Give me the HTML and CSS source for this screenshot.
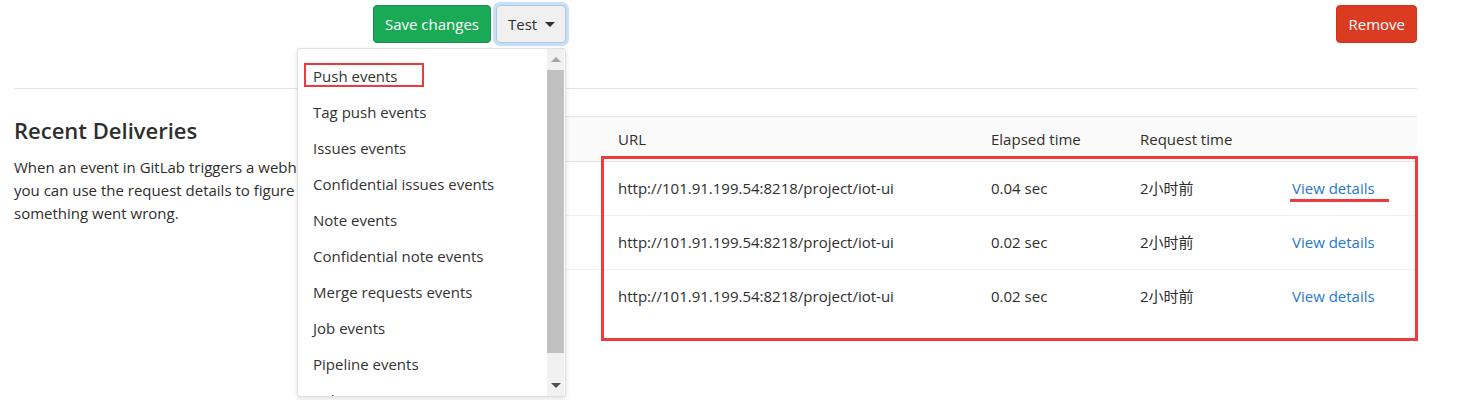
FILE: index.html
```html
<!DOCTYPE html>
<html lang="en">
<head>
<meta charset="utf-8">
<title>Webhook</title>
<link rel="stylesheet" href="styles.css">
</head>
<body>
<div class="page">
  <div class="toolbar">
    <div class="toolbar-spacer"></div>
    <div class="actions">
      <button class="btn btn-success">Save changes</button>
      <div class="dropdown">
        <button class="btn btn-default btn-test is-focused">Test<span class="caret"></span></button>
        <div class="dropdown-menu">
          <ul class="menu-list">
            <li class="menu-item"><span class="mark-box"></span>Push events</li>
            <li class="menu-item">Tag push events</li>
            <li class="menu-item">Issues events</li>
            <li class="menu-item">Confidential issues events</li>
            <li class="menu-item">Note events</li>
            <li class="menu-item">Confidential note events</li>
            <li class="menu-item">Merge requests events</li>
            <li class="menu-item">Job events</li>
            <li class="menu-item">Pipeline events</li>
            <li class="menu-item">Wiki page events</li>
          </ul>
          <div class="scrollbar">
            <div class="sb-btn"><span class="arrow-up"></span></div>
            <div class="sb-track"><div class="sb-thumb"></div></div>
            <div class="sb-btn"><span class="arrow-down"></span></div>
          </div>
        </div>
      </div>
      <button class="btn btn-danger">Remove</button>
    </div>
  </div>

  <div class="section">
    <div class="intro">
      <h3 class="intro-title">Recent Deliveries</h3>
      <p class="intro-text">When an event in GitLab triggers a webhook, you can use the request details to figure out if something went wrong.</p>
    </div>
    <div class="deliveries">
      <table class="hooks-table">
        <colgroup>
          <col class="c-lead"><col class="c-url"><col class="c-elapsed"><col class="c-time"><col class="c-action">
        </colgroup>
        <thead>
          <tr><th></th><th>URL</th><th>Elapsed time</th><th>Request time</th><th></th></tr>
        </thead>
        <tbody>
          <tr><td></td><td>http://101.91.199.54:8218/project/iot-ui</td><td>0.04 sec</td><td>2小时前</td><td><a class="link" href="#">View details</a></td></tr>
          <tr><td></td><td>http://101.91.199.54:8218/project/iot-ui</td><td>0.02 sec</td><td>2小时前</td><td><a class="link" href="#">View details</a></td></tr>
          <tr><td></td><td>http://101.91.199.54:8218/project/iot-ui</td><td>0.02 sec</td><td>2小时前</td><td><a class="link" href="#">View details</a></td></tr>
        </tbody>
      </table>
      <div class="mark-rows"></div>
      <div class="mark-underline"></div>
    </div>
  </div>
</div>
</body>
</html>
```

FILE: styles.css
```css
* { box-sizing: border-box; }

html, body {
  min-height: 400px;
}

body {
  margin: 0;
  background: #fff;
  color: #2e2e2e;
  font-family: "Open Sans", "Noto Sans CJK SC", sans-serif;
  font-size: 15px;
}

.page {
  min-height: 400px;
  padding: 0 51px 0 14px;
}

/* top toolbar */
.toolbar {
  display: grid;
  grid-template-columns: 344px 1fr;
  column-gap: 15px;
  height: 89px;
  padding-top: 5px;
  border-bottom: 1px solid #e5e5e5;
}

.actions {
  display: flex;
  align-items: flex-start;
  gap: 5px;
}

.btn {
  height: 38px;
  padding: 0 11px;
  border: 1px solid transparent;
  border-radius: 4px;
  font: inherit;
  line-height: 36px;
  display: inline-flex;
  align-items: center;
  cursor: pointer;
}

.btn-success {
  background: #1aaa55;
  border-color: #168f48;
  color: #fff;
}

.btn-danger {
  background: #db3b21;
  border-color: #c9341d;
  color: #fff;
  margin-left: auto;
}

.btn-default {
  background: #f0f0f0;
  border-color: #a9c9ec;
  color: #2e2e2e;
}

.btn-test {
  width: 70px;
}

.is-focused {
  box-shadow: 0 0 0 3px #c9dff6;
}

.caret {
  display: inline-block;
  width: 0;
  height: 0;
  margin-left: 8px;
  border-left: 5px solid transparent;
  border-right: 5px solid transparent;
  border-top: 5px solid #2e2e2e;
}

/* dropdown */
.dropdown {
  position: relative;
}

.dropdown-menu {
  position: absolute;
  top: 43px;
  right: 0;
  width: 269px;
  height: 349px;
  background: #fff;
  border: 1px solid #e0e0e0;
  border-radius: 3px;
  box-shadow: 0 2px 5px rgba(0, 0, 0, 0.12);
  display: flex;
  overflow: hidden;
  z-index: 10;
}

.menu-list {
  flex: 1;
  list-style: none;
  margin: 0;
  padding: 9px 0 0;
  overflow: hidden;
}

.menu-item {
  position: relative;
  padding: 7px 15px;
  line-height: 22px;
  color: #333;
  white-space: nowrap;
}

.mark-box {
  position: absolute;
  left: 6px;
  top: 5px;
  width: 120px;
  height: 24px;
  border: 2px solid #ef3b3b;
}

.scrollbar {
  width: 17px;
  margin-right: 1px;
  background: #f1f1f1;
  display: flex;
  flex-direction: column;
}

.sb-btn {
  height: 21px;
  display: flex;
  align-items: center;
  justify-content: center;
}

.sb-track {
  flex: 1;
}

.sb-thumb {
  height: 283px;
  background: #c1c1c1;
}

.arrow-up {
  width: 0;
  height: 0;
  border-left: 5px solid transparent;
  border-right: 5px solid transparent;
  border-bottom: 5px solid #a3a3a3;
}

.arrow-down {
  width: 0;
  height: 0;
  border-left: 5px solid transparent;
  border-right: 5px solid transparent;
  border-top: 5px solid #505050;
}

/* lower section */
.section {
  display: grid;
  grid-template-columns: 344px 1fr;
  column-gap: 15px;
  padding-top: 27px;
}

.intro-title {
  margin: 0;
  font-size: 22px;
  font-weight: 600;
  line-height: 28px;
}

.intro-text {
  margin: 12px 0 0;
  max-width: 328px;
  line-height: 23px;
}

.deliveries {
  position: relative;
}

.hooks-table {
  width: 100%;
  border-collapse: collapse;
  table-layout: fixed;
}

.c-lead { width: 229px; }
.c-url { width: 373px; }
.c-elapsed { width: 149px; }
.c-time { width: 152px; }
.c-action { width: 141px; }

.hooks-table th {
  background: #fafafa;
  border-top: 1px solid #e5e5e5;
  border-bottom: 1px solid #e5e5e5;
  padding: 12px 16px 11px;
  line-height: 21px;
  text-align: left;
  font-weight: 400;
  white-space: nowrap;
}

.hooks-table td {
  height: 54px;
  padding: 0 16px;
  line-height: 21px;
  vertical-align: middle;
  border-bottom: 1px solid #f0f0f0;
  white-space: nowrap;
}

.hooks-table tbody tr:last-child td {
  border-bottom: none;
}

.link {
  color: #1f78d1;
  text-decoration: none;
}

.mark-rows {
  position: absolute;
  left: 228px;
  top: 40px;
  width: 817px;
  height: 185px;
  border: 3px solid #ef3b3b;
}

.mark-underline {
  position: absolute;
  left: 917px;
  top: 83px;
  width: 99px;
  height: 3px;
  background: #ef3b3b;
}
```
